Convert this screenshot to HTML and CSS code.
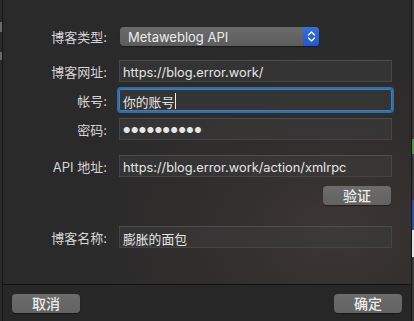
FILE: index.html
```html
<!DOCTYPE html>
<html lang="zh">
<head>
    <meta charset="UTF-8">
    <title>博客设置</title>
    <link rel="stylesheet" href="styles.css">
</head>
<body>
    <div class="strip left-strip">
        <div class="bit" style="height: 22px"></div>
        <div class="bit light" style="height: 10px"></div>
        <div class="bit" style="height: 20px"></div>
        <div class="bit light" style="height: 8px"></div>
    </div>
    <div class="fenster">
        <div class="inhalt">
            <div class="zeile r1">
                <label>博客类型:</label>
                <div class="auswahl">
                    <span>Metaweblog API</span>
                    <span class="pfeile">
                        <svg width="9" height="13" viewBox="0 0 9 13"><path d="M1.5 5 L4.5 2 L7.5 5 M1.5 8 L4.5 11 L7.5 8" fill="none" stroke="#fff" stroke-width="1.3" stroke-linecap="round" stroke-linejoin="round"/></svg>
                    </span>
                </div>
            </div>
            <div class="zeile r2">
                <label>博客网址:</label>
                <div class="feld">https://blog.error.work/</div>
            </div>
            <div class="zeile r3">
                <label>帐号:</label>
                <div class="feld fokus">你的账号<span class="cursor"></span></div>
            </div>
            <div class="zeile r4">
                <label>密码:</label>
                <div class="feld punkte">●●●●●●●●●●</div>
            </div>
            <div class="zeile r5">
                <label>API 地址:</label>
                <div class="feld">https://blog.error.work/action/xmlrpc</div>
            </div>
            <div class="zeile r6">
                <span></span>
                <div class="rechts"><button class="knopf">验证</button></div>
            </div>
            <div class="zeile r7">
                <label>博客名称:</label>
                <div class="feld">膨胀的面包</div>
            </div>
        </div>
        <div class="fuss">
            <button class="knopf">取消</button>
            <button class="knopf">确定</button>
        </div>
    </div>
    <div class="strip right-strip">
        <div class="bit" style="height: 139px"></div>
        <div class="bit green" style="height: 15px"></div>
        <div class="bit" style="height: 46px"></div>
        <div class="bit blue" style="height: 30px"></div>
        <div class="bit white" style="height: 27px"></div>
        <div class="bit" style="height: 64px"></div>
    </div>
</body>
</html>
```

FILE: styles.css
```css
body {
    margin: 0;
    width: 414px;
    height: 321px;
    display: flex;
    background-color: #1e1e1e;
    font-family: "Inter", "Noto Sans CJK SC", sans-serif;
    font-size: 13px;
    color: #d6d6d6;
    overflow: hidden;
}

.strip {
    width: 2px;
    display: flex;
    flex-direction: column;
    background-color: #2a2a2a;
}

.right-strip {
    background-color: #3c3c3c;
}

.bit.light { background-color: #6a6a6a; }
.bit.green { background-color: #4f9a3c; }
.bit.blue { background-color: #2d4fb0; }
.bit.white { background-color: #e4e4e4; }

.fenster {
    width: 408px;
    border-left: 1px solid #151515;
    border-right: 1px solid #151515;
    display: flex;
    flex-direction: column;
    background: radial-gradient(ellipse 260px 200px at 330px 230px, #3d3734 0%, #312e2d 45%, #2a2a2a 100%);
}

.inhalt {
    height: 257px;
    padding-top: 27px;
    border-bottom: 1px solid #121212;
}

.zeile {
    display: grid;
    grid-template-columns: 104px 273px;
    column-gap: 12px;
    align-items: center;
}

.zeile label {
    text-align: right;
    white-space: nowrap;
}

.r1 { height: 19px; }
.r2 { margin-top: 14px; }
.r3 { margin-top: 7px; }
.r4 { margin-top: 7px; }
.r5 { margin-top: 15px; }
.r6 { margin-top: 9px; }
.r7 { margin-top: 21px; }

.auswahl {
    width: 199px;
    height: 19px;
    margin-left: 1px;
    box-sizing: border-box;
    display: flex;
    justify-content: space-between;
    align-items: center;
    padding-left: 8px;
    border-radius: 4px;
    background: linear-gradient(#6a6a6a, #5d5d5d);
    box-shadow: 0 1px 1px rgba(0, 0, 0, 0.4);
    color: #ececec;
    font-size: 13px;
}

.pfeile {
    width: 16px;
    height: 19px;
    display: flex;
    align-items: center;
    justify-content: center;
    border-radius: 0 4px 4px 0;
    background: linear-gradient(#3270e0, #2458c8);
}

.feld {
    height: 22px;
    box-sizing: border-box;
    padding: 2px 3px 0;
    display: flex;
    align-items: center;
    background-color: rgba(60, 60, 60, 0.55);
    border: 1px solid #454545;
    border-top-color: #4d4d4d;
    color: #e6e6e6;
    font-size: 12.8px;
    white-space: nowrap;
}

.fokus {
    box-shadow: 0 0 0 2px #2f6ea8;
    border-color: #3d7fbb;
    border-radius: 2px;
}

.cursor {
    display: inline-block;
    width: 1px;
    height: 16px;
    margin-left: 1px;
    background-color: #f0f0f0;
}

.punkte {
    font-size: 8px;
    letter-spacing: 0.6px;
    padding-top: 1px;
}

.rechts {
    display: flex;
    justify-content: flex-end;
    padding-right: 1px;
}

.knopf {
    width: 68px;
    height: 19px;
    padding: 0;
    border: none;
    border-radius: 4px;
    background: linear-gradient(#6c6c6c, #626262);
    box-shadow: 0 1px 1px rgba(0, 0, 0, 0.4);
    color: #ececec;
    font-family: "Noto Sans CJK SC", sans-serif;
    font-size: 14px;
    font-weight: 500;
    line-height: 19px;
}

.fuss {
    flex: 1;
    display: flex;
    justify-content: space-between;
    align-items: flex-start;
    padding: 9px 9px 0 9px;
    background-color: #272727;
}
```
